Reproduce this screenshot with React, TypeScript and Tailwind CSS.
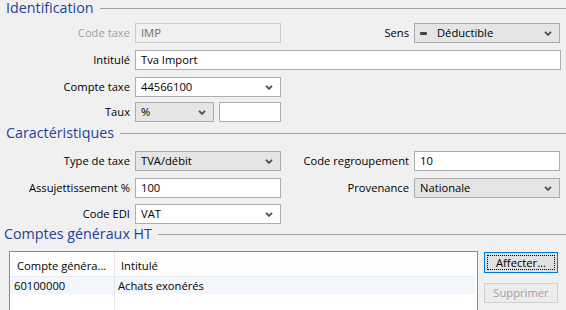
import type { ReactNode } from "react";

const Chevron = () => (
  <svg width="8" height="5" viewBox="0 0 8 5" className="shrink-0">
    <path d="M1 0.8 L4 3.8 L7 0.8" stroke="#4f4f4f" strokeWidth="1.9" fill="none" />
  </svg>
);

function Heading({ title, className = "" }: { title: string; className?: string }) {
  return (
    <div className={`flex h-[14px] items-center gap-[6px] ${className}`}>
      <span className="text-[14.3px] leading-[14px] text-[#1f419b] whitespace-nowrap">{title}</span>
      <div className="h-px flex-1 bg-[#a0a0a0]" />
    </div>
  );
}

function TextBox({ value, disabled, className = "" }: { value: string; disabled?: boolean; className?: string }) {
  return (
    <div
      className={`flex h-[20px] items-center border pl-[5px] ${
        disabled ? "border-[#cccccc] bg-[#f0f0f0] text-[#6d6d6d]" : "border-[#abadb3] bg-white text-black"
      } ${className}`}
    >
      {value}
    </div>
  );
}

function Select({ children, white, className = "" }: { children: ReactNode; white?: boolean; className?: string }) {
  return (
    <div
      className={`flex h-[20px] items-center justify-between border pl-[5px] pr-[7px] ${
        white ? "border-[#abadb3] bg-white" : "border-[#acacac] bg-[#e5e5e5]"
      } ${className}`}
    >
      <div className="flex items-center">{children}</div>
      <Chevron />
    </div>
  );
}

function Row({
  label,
  children,
  right,
  disabled,
  className = "",
}: {
  label: string;
  children: ReactNode;
  right?: { label: string; control: ReactNode };
  disabled?: boolean;
  className?: string;
}) {
  return (
    <div className={`flex h-[20px] items-center ${className}`}>
      <div className={`w-[130px] shrink-0 text-right ${disabled ? "text-[#a0a0a0]" : "text-black"}`}>{label}</div>
      <div className="ml-[5px] w-[146px] shrink-0">{children}</div>
      {right && (
        <>
          <div className="flex-1 text-right text-black">{right.label}</div>
          <div className="ml-[5px] mr-[6px] w-[146px] shrink-0">{right.control}</div>
        </>
      )}
    </div>
  );
}

export default function App() {
  return (
    <div className="h-[310px] w-[566px] overflow-hidden bg-[#f0f0f0] pt-[1px] font-['Open_Sans',sans-serif] text-[11.2px] leading-[14px]">
      <Heading title="Identification" className="pl-[6px]" />

      <Row
        label="Code taxe"
        disabled
        className="mt-[8px]"
        right={{
          label: "Sens",
          control: (
            <Select>
              <span className="h-[3px] w-[7px] rounded-[1px] bg-[#444]" />
              <span className="ml-[10px]">Déductible</span>
            </Select>
          ),
        }}
      >
        <TextBox value="IMP" disabled />
      </Row>

      <div className="mt-[7px] flex h-[20px] items-center">
        <div className="w-[130px] shrink-0 text-right">Intitulé</div>
        <TextBox value="Tva Import" className="ml-[5px] mr-[5px] flex-1" />
      </div>

      <Row label="Compte taxe" className="mt-[7px]">
        <Select white>44566100</Select>
      </Row>

      <Row label="Taux" className="mt-[5px]">
        <div className="flex gap-[5px]">
          <Select className="w-[79px]">%</Select>
          <TextBox value="" className="flex-1" />
        </div>
      </Row>

      <Heading title="Caractéristiques" className="mt-[4px] pl-[6px]" />

      <Row
        label="Type de taxe"
        className="mt-[11px]"
        right={{ label: "Code regroupement", control: <TextBox value="10" /> }}
      >
        <Select>TVA/débit</Select>
      </Row>

      <Row
        label="Assujettissement %"
        className="mt-[7px]"
        right={{ label: "Provenance", control: <Select>Nationale</Select> }}
      >
        <TextBox value="100" />
      </Row>

      <Row label="Code EDI" className="mt-[6px]">
        <Select white>VAT</Select>
      </Row>

      <Heading title="Comptes généraux HT" className="mt-[3px] pl-[4px]" />

      <div className="mt-[10px] flex">
        <div className="ml-[9px] flex h-[70px] w-[469px] flex-col border border-[#86898f] bg-white">
          <div className="flex h-[25px] w-[465px] border-b border-[#e8ecf1] bg-[#fdfdfd]">
            <div className="flex w-[105px] items-center border-r border-[#e5e5e5] pl-[7px] pt-[3px]">Compte généra...</div>
            <div className="flex flex-1 items-center pl-[6px] pt-[3px]">Intitulé</div>
          </div>
          <div className="flex h-[17px] w-[465px] bg-[#f3f7fc]">
            <div className="flex w-[105px] items-center border-r border-[#e5e5e5] pl-[4px]">60100000</div>
            <div className="flex flex-1 items-center pl-[3px]">Achats exonérés</div>
          </div>
          <div className="flex flex-1">
            <div className="w-[105px] border-r border-[#e5e5e5]" />
          </div>
        </div>

        <div className="ml-[6px] flex w-[74px] flex-col">
          <div className="mt-[1px] h-[21px] border border-[#0078d7] bg-[#e1e1e1] p-[2px]">
            <div className="flex h-full items-center justify-center border border-dotted border-black">Affecter...</div>
          </div>
          <div className="mt-[10px] flex h-[20px] items-center justify-center border border-[#cfcfcf] bg-[#ececec] text-[#a0a0a0]">
            Supprimer
          </div>
        </div>
      </div>
    </div>
  );
}
